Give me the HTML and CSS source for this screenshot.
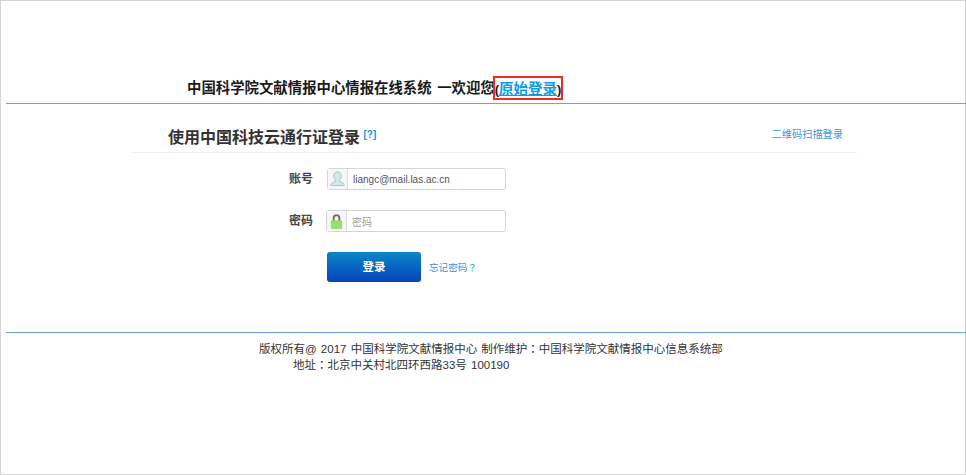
FILE: index.html
```html
<!DOCTYPE html>
<html lang="zh">
<head>
<meta charset="utf-8">
<title>登录</title>
<link rel="stylesheet" href="styles.css">
</head>
<body>
<div class="frame">
  <header class="banner">
    <h1 class="banner-title">中国科学院文献情报中心情报在线系统 一欢迎您<span class="origin-box">(<a class="origin-link" href="#">原始登录</a>)</span></h1>
  </header>
  <main class="main">
    <div class="panel">
      <div class="panel-head">
        <h2 class="panel-title">使用中国科技云通行证登录 <a class="help" href="#">[?]</a></h2>
        <a class="qr-link" href="#">二维码扫描登录</a>
      </div>
      <form class="form">
        <div class="row">
          <span class="label">账号</span>
          <div class="field field-user">
            <span class="field-icon">
              <svg width="20" height="20" viewBox="0 0 20 20"><path d="M10 2.500c2.600 0 4 2 4 4.400 0 1.800-.8 3.300-1.800 4.200v1.600c1.600.8 4.800 1.300 4.800 3.300v1H3v-1c0-2 3.200-2.500 4.800-3.300v-1.600C6.800 10.200 6 8.700 6 6.900c0-2.400 1.400-4.400 4-4.400z" fill="#d3e6ea" stroke="#9cc3cc" stroke-width="1"/></svg>
            </span>
            <span class="field-value">liangc@mail.las.ac.cn</span>
          </div>
        </div>
        <div class="row">
          <span class="label">密码</span>
          <div class="field">
            <span class="field-icon">
              <svg width="20" height="20" viewBox="0 0 20 20"><path d="M6 10V6.500C6 4.300 7.600 3 10 3s4 1.300 4 3.500V10h-2V6.800C12 5.600 11.200 5 10 5s-2 .6-2 1.800V10z" fill="#6f6f6f"/><rect x="4" y="9.500" width="12" height="9" rx="1" fill="#9ade6e"/></svg>
            </span>
            <span class="field-value placeholder">密码</span>
          </div>
        </div>
        <div class="actions">
          <button class="submit" type="button">登录</button>
          <a class="forgot" href="#">忘记密码<span class="cjk-mark" lang="zh-TW">？</span></a>
        </div>
      </form>
    </div>
  </main>
  <footer class="footer">
    <p class="copy">版权所有@ 2017 中国科学院文献情报中心 制作维护<span class="cjk-mark" lang="zh-TW">：</span>中国科学院文献情报中心信息系统部</p>
    <p class="addr">地址<span class="cjk-mark" lang="zh-TW">：</span>北京中关村北四环西路33号 100190</p>
  </footer>
</div>
</body>
</html>
```
FILE: styles.css
```css
* { box-sizing: border-box; }
html, body { margin: 0; padding: 0; }
body {
  width: 966px;
  height: 475px;
  overflow: hidden;
  background: #fff;
  font-family: "Liberation Sans", "Noto Sans CJK SC", sans-serif;
  color: #333;
}
a { text-decoration: none; }
.frame {
  width: 966px;
  height: 475px;
  border: 1px solid #d4d4d4;
  padding-top: 75px;
}
.banner {
  margin: 0 0 0 5px;
  width: 960px;
  height: 28px;
  border-bottom: 1px solid #6fa5de;
  padding-left: 181px;
}
.banner-title {
  margin: 0;
  font-size: 14.4px;
  line-height: 25px;
  font-weight: 700;
  color: #1a1a1a;
  white-space: nowrap;
  word-spacing: 1.5px;
}
.origin-box {
  display: inline-block;
  height: 24px;
  line-height: 22px;
  margin-left: -2px;
  border: 2px solid #ee2a2f;
  vertical-align: top;
  font-size: 13px;
  color: #1a1a1a;
}
.origin-link {
  color: #0d9be8;
  text-decoration: underline;
  font-size: 14.5px;
}
.main { height: 228px; }
.panel { width: 726px; margin-left: 130px; }
.panel-head {
  display: flex;
  justify-content: space-between;
  align-items: center;
  height: 49px;
  padding: 8px 14px 0 37px;
  border-bottom: 1px solid #f1f1f1;
}
.panel-title {
  margin: 8px 0 0;
  font-size: 16px;
  font-weight: 700;
  color: #333;
}
.help {
  position: relative;
  top: -5px;
  left: -1px;
  font-size: 10px;
  color: #1a8fe0;
}
.qr-link { margin-top: 2px; font-size: 10.200px; color: #3c97d3; }
.form { padding: 15px 0 0 157px; }
.row {
  display: flex;
  align-items: center;
  height: 22px;
  margin-bottom: 20px;
}
.label {
  width: 38px;
  padding: 0 0 4px 1px;
  font-size: 12px;
  font-weight: 700;
  color: #444;
}
.field {
  display: flex;
  align-items: center;
  width: 180px;
  height: 22px;
  border: 1px solid #d5d5d5;
  border-radius: 3px;
}
.field-user { width: 179px; margin-left: 1px; }
.field-icon {
  display: flex;
  align-items: center;
  justify-content: center;
  width: 20px;
  height: 20px;
  border-right: 1px solid #dcdcdc;
  background: #f7f7f7;
}
.field-value {
  padding-left: 5px;
  font-size: 10px;
  color: #555;
}
.placeholder { color: #a0a0a0; }
.actions {
  display: flex;
  align-items: center;
  gap: 8px;
  margin-left: 39px;
}
.submit {
  width: 94px;
  height: 30px;
  padding: 0 0 2px;
  border: 0;
  border-radius: 3px;
  background: linear-gradient(#0b86c8, #0444bb);
  color: #fff;
  font-family: inherit;
  font-size: 11.500px;
  font-weight: 700;
}
.forgot { font-size: 9.600px; color: #3a93c9; }
.cjk-mark { font-family: "Noto Sans CJK TC", sans-serif; }
.footer {
  margin-left: 5px;
  width: 960px;
  border-top: 1px solid #6fa5de;
  padding-top: 8px;
}
.copy, .addr {
  margin: 0;
  font-size: 11.500px;
  line-height: 15px;
  color: #333;
  white-space: nowrap;
  word-spacing: 1px;
}
.copy { padding-left: 253px; }
.addr { padding-left: 287px; }
```
